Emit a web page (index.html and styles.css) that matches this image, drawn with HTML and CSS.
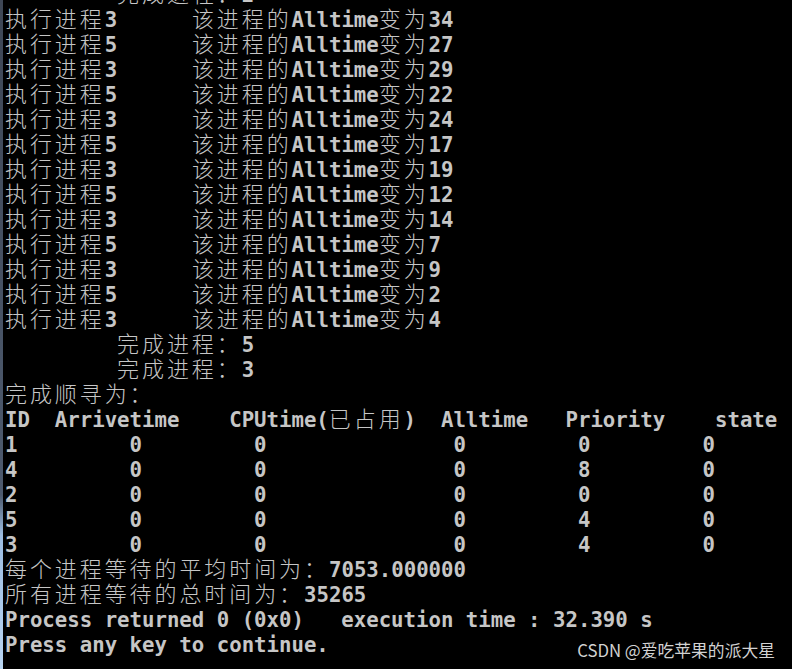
FILE: index.html
```html
<!DOCTYPE html>
<html lang="zh-CN">
<head>
    <meta charset="UTF-8">
    <meta name="viewport" content="width=device-width, initial-scale=1.0">
    <title>Console</title>
    <link rel="stylesheet" href="styles.css">
</head>
<body>
    <div class="screen">
        <div class="edge"></div>
        <div class="lines">
            <div class="ln">         <span class="cj">完成进程：</span>2</div>
            <div class="ln"><span class="cj">执行进程</span>3      <span class="cj">该进程的</span>Alltime<span class="cj">变为</span>34</div>
            <div class="ln"><span class="cj">执行进程</span>5      <span class="cj">该进程的</span>Alltime<span class="cj">变为</span>27</div>
            <div class="ln"><span class="cj">执行进程</span>3      <span class="cj">该进程的</span>Alltime<span class="cj">变为</span>29</div>
            <div class="ln"><span class="cj">执行进程</span>5      <span class="cj">该进程的</span>Alltime<span class="cj">变为</span>22</div>
            <div class="ln"><span class="cj">执行进程</span>3      <span class="cj">该进程的</span>Alltime<span class="cj">变为</span>24</div>
            <div class="ln"><span class="cj">执行进程</span>5      <span class="cj">该进程的</span>Alltime<span class="cj">变为</span>17</div>
            <div class="ln"><span class="cj">执行进程</span>3      <span class="cj">该进程的</span>Alltime<span class="cj">变为</span>19</div>
            <div class="ln"><span class="cj">执行进程</span>5      <span class="cj">该进程的</span>Alltime<span class="cj">变为</span>12</div>
            <div class="ln"><span class="cj">执行进程</span>3      <span class="cj">该进程的</span>Alltime<span class="cj">变为</span>14</div>
            <div class="ln"><span class="cj">执行进程</span>5      <span class="cj">该进程的</span>Alltime<span class="cj">变为</span>7</div>
            <div class="ln"><span class="cj">执行进程</span>3      <span class="cj">该进程的</span>Alltime<span class="cj">变为</span>9</div>
            <div class="ln"><span class="cj">执行进程</span>5      <span class="cj">该进程的</span>Alltime<span class="cj">变为</span>2</div>
            <div class="ln"><span class="cj">执行进程</span>3      <span class="cj">该进程的</span>Alltime<span class="cj">变为</span>4</div>
            <div class="ln">         <span class="cj">完成进程：</span>5</div>
            <div class="ln">         <span class="cj">完成进程：</span>3</div>
            <div class="ln"><span class="cj">完成顺寻为：</span></div>
            <div class="ln">ID  Arrivetime    CPUtime(<span class="cj">已占用</span>)  Alltime   Priority    state</div>
            <div class="ln">1         0         0               0         0         0</div>
            <div class="ln">4         0         0               0         8         0</div>
            <div class="ln">2         0         0               0         0         0</div>
            <div class="ln">5         0         0               0         4         0</div>
            <div class="ln">3         0         0               0         4         0</div>
            <div class="ln"><span class="cj">每个进程等待的平均时间为：</span>7053.000000</div>
            <div class="ln"><span class="cj">所有进程等待的总时间为：</span>35265</div>
            <div class="ln">Process returned 0 (0x0)   execution time : 32.390 s</div>
            <div class="ln">Press any key to continue.</div>
        </div>
        <div class="mark">CSDN @爱吃苹果的派大星</div>
    </div>
</body>
</html>
```

FILE: styles.css
```css
*,*::before,*::after{
    box-sizing: border-box;
}
body{
    margin: 0;
    background: #000;
}
.screen{
    position: relative;
    display: flex;
    height: 669px;
    overflow: hidden;
    background: #000;
}
.edge{
    flex: 0 0 3px;
    background: linear-gradient(to bottom, #3e4756 0, #4d5a6e 74%, #9cbde2 80%, #b9d5f2 100%);
}
.lines{
    flex: 1;
    margin-top: -17px;
    padding-left: 2px;
    color: #c6c6c6;
    font-family: "DejaVu Sans Mono", monospace;
    font-weight: bold;
    font-size: 20.7px;
}
.ln{
    height: 25px;
    line-height: 25px;
    white-space: pre;
}
.cj{
    font-family: "Noto Sans CJK SC", sans-serif;
    font-weight: 300;
    font-size: 22px;
    letter-spacing: 2.92px;
    line-height: 0;
}
.mark{
    position: absolute;
    right: 17px;
    bottom: 7px;
    color: #d2d2d2;
    font-family: "Noto Sans CJK SC", sans-serif;
    font-size: 16.8px;
    line-height: 24px;
}
```
